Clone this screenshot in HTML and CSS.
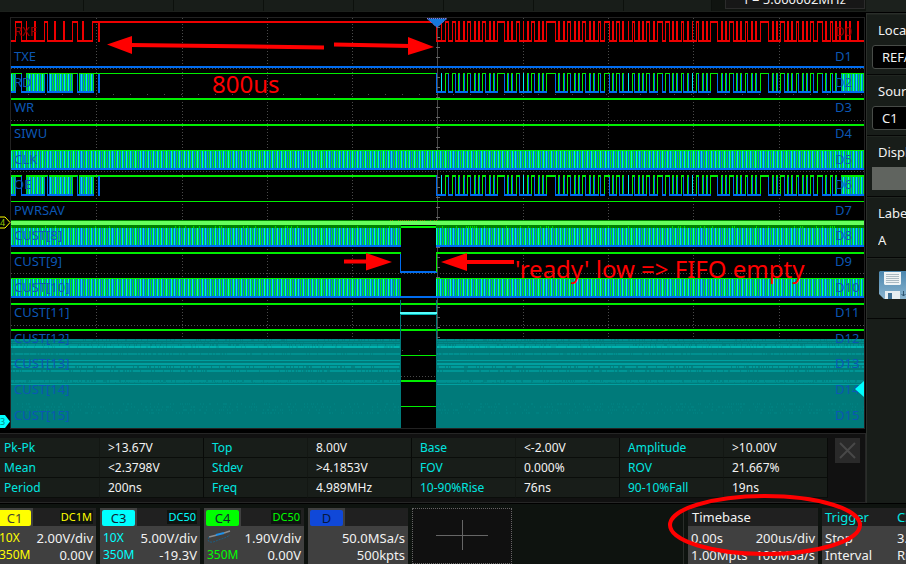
FILE: index.html
```html
<!DOCTYPE html>
<html lang="en">
<head>
    <meta charset="utf-8">
    <title>Oscilloscope</title>
    <link rel="stylesheet" href="styles.css">
</head>
<body>
    <div class="scope">
        <header class="menu">
            <div class="menu-items">
                <span></span><span></span><span></span><span></span>
                <span></span><span></span><span></span><span></span>
            </div>
            <div class="counter">f = 5.000002MHz</div>
            <div class="menu-end"></div>
        </header>

        <main class="main">
            <svg class="screen" id="screen" viewBox="0 12 866 421" role="img" aria-label="Waveforms">
                <defs>
                    <pattern id="dense" width="31" height="40" patternUnits="userSpaceOnUse"></pattern>
                </defs>
                <rect class="frame" x="10.5" y="17.5" width="854" height="411"/>
                <g id="grid"></g>
                <g id="traces"></g>
                <g id="analog"></g>
                <g id="labels"></g>

                <!-- trigger position and channel offset markers -->
                <path class="trigger-pos" d="M427 18.500H447L437 27.500Z"/>
                <path class="mark-c4" d="M-1 217H5L10 222.500L5 228H-1"/>
                <text class="mark-text mark-text-c4" x="0" y="226">4</text>
                <path class="mark-c3" d="M0 415H5L10 421.500L5 428H0Z"/>
                <text class="mark-text" x="0" y="425">3</text>
                <path class="mark-c3" d="M864 381L855 389L864 397Z"/>

                <g class="note">
                    <path class="note-line" d="M130 45L324 47.500M334 44.500L410 46M344 261.500H368M465 262H514"/>
                    <path d="M107 44.500L132 36V54ZM434 47L408 37V55ZM392 262L366 253V270.500ZM441 262L467 253V271Z"/>
                    <text x="212" y="93">800us</text>
                    <text x="515" y="278">'ready' low =&gt; FIFO empty</text>
                </g>
            </svg>

            <section class="measure">
                <div class="measure-list">
                    <table class="measure-table">
                        <tr>
                            <th>Pk-Pk</th><td>&gt;13.67V</td>
                            <th>Top</th><td>8.00V</td>
                            <th>Base</th><td>&lt;-2.00V</td>
                            <th>Amplitude</th><td>&gt;10.00V</td>
                        </tr>
                        <tr>
                            <th>Mean</th><td>&lt;2.3798V</td>
                            <th>Stdev</th><td>&gt;4.1853V</td>
                            <th>FOV</th><td>0.000%</td>
                            <th>ROV</th><td>21.667%</td>
                        </tr>
                        <tr>
                            <th>Period</th><td>200ns</td>
                            <th>Freq</th><td>4.989MHz</td>
                            <th>10-90%Rise</th><td>76ns</td>
                            <th>90-10%Fall</th><td>19ns</td>
                        </tr>
                    </table>
                </div>
                <button type="button" class="close" aria-label="Close">
                    <svg width="25" height="25" viewBox="0 0 25 25"><path d="M5 5L20 20M20 5L5 20"/></svg>
                </button>
            </section>
        </main>

        <aside class="side">
            <div class="side-group">
                <label for="location">Loca</label>
                <select id="location"><option>REFA</option></select>
            </div>
            <div class="side-group">
                <label for="source">Sour</label>
                <select id="source"><option>C1</option></select>
            </div>
            <div class="side-group">
                <label for="display">Displ</label>
                <button type="button" class="toggle" id="display"></button>
            </div>
            <div class="side-group">
                <label for="label">Labe</label>
                <input id="label" type="text" value="A">
            </div>
            <div class="side-group">
                <button type="button" class="save" aria-label="Save">
                    <svg width="32" height="28" viewBox="0 0 32 28">
                        <defs>
                            <linearGradient id="disk" x1="0" y1="0" x2="0" y2="1">
                                <stop offset="0" stop-color="#4a86ae"/>
                                <stop offset="1" stop-color="#8ab4cf"/>
                            </linearGradient>
                        </defs>
                        <path fill="url(#disk)" d="M1 0H32V28H5L0 23V1Z"/>
                        <path fill="#eef3f5" d="M5 1H22V13L21 14H6L5 13Z"/>
                        <path stroke="#a9b9c2" d="M7 3.500H20M7 5.500H20M7 7.500H20M7 9.500H20M7 11.500H20"/>
                        <path fill="#e6eef2" d="M6 20H21V28H6Z"/>
                        <path fill="#3f7195" d="M9 22H13V28H9Z"/>
                        <path fill="none" stroke="#2d536e" d="M24.500 20V25M22.500 23L24.500 25L26.500 23"/>
                    </svg>
                </button>
            </div>
        </aside>

        <footer class="bar">
            <div class="card c1">
                <div class="card-head"><span class="tab"><b>C1</b></span><i>DC1M</i></div>
                <div class="row"><em>10X</em><span>2.00V/div</span></div>
                <div class="row"><em>350M</em><span>0.00V</span></div>
            </div>
            <div class="card c3">
                <div class="card-head"><span class="tab"><b>C3</b></span><i>DC50</i></div>
                <div class="row"><em>10X</em><span>5.00V/div</span></div>
                <div class="row"><em>350M</em><span>-19.3V</span></div>
            </div>
            <div class="card c4">
                <div class="card-head"><span class="tab"><b>C4</b></span><i>DC50</i></div>
                <div class="row">
                    <svg width="25" height="14" viewBox="0 0 25 14" fill="none">
                        <path stroke="#8a8f92" stroke-width="1.500" d="M2 7L10 5M17 3L23 1"/>
                        <path stroke="#1e90e8" stroke-width="2" d="M9 5L17 3"/>
                        <path stroke="#1d5c80" stroke-dasharray="2 1" d="M2 7C-1 13 5 13 9 11S17 9 23 5"/>
                    </svg>
                    <span>1.90V/div</span>
                </div>
                <div class="row"><em>350M</em><span>0.00V</span></div>
            </div>
            <div class="card digital">
                <div class="card-head"><span class="tab"><b>D</b></span></div>
                <div class="row"><em></em><span>50.0MSa/s</span></div>
                <div class="row"><em></em><span>500kpts</span></div>
            </div>
            <button type="button" class="add" aria-label="Add channel">
                <svg width="52" height="30" viewBox="0 0 52 30"><path d="M0 15.500H52M26.500 0V30"/></svg>
            </button>
            <div class="acquire">
                <div class="card timebase">
                    <div class="card-head">Timebase</div>
                    <div class="row"><span>0.00s</span><span>200us/div</span></div>
                    <div class="row"><span>1.00Mpts</span><span>100MSa/s</span></div>
                    <svg class="circle" width="198" height="66" viewBox="0 0 198 66"><ellipse cx="99" cy="33" rx="95" ry="29"/></svg>
                </div>
                <div class="card trigger">
                    <div class="card-head"><span>Trigger</span><span>C3</span></div>
                    <div class="row"><span>Stop</span><span>3.</span></div>
                    <div class="row"><span>Interval</span><span>Ris</span></div>
                </div>
            </div>
        </footer>
    </div>
    <script src="scope.js"></script>
</body>
</html>
```
FILE: styles.css
```css
* {
    box-sizing: border-box;
}
body {
    margin: 0;
    background: #000;
    color: #f2f2f2;
    font: 13px/16px "Noto Sans", "Open Sans", sans-serif;
    overflow: hidden;
}
button, select, input {
    font: inherit;
    color: inherit;
    padding: 0;
    border: none;
}
.scope {
    display: grid;
    grid-template-columns: minmax(0, 1fr) 40px;
    min-height: 100vh;
    grid-template-rows: auto auto 1fr;
    overflow: hidden;
}

/* top menu */
.menu {
    grid-column: 1 / 3;
    display: flex;
    height: 12px;
    background: #101410;
    border-bottom: 1px solid #1c201c;
}
.menu-items {
    display: flex;
    width: 712px;
}
.menu-items span {
    flex: 0 0 90px;
    background: #181d19;
    border-right: 1px solid #0c100c;
}
.menu-items span:first-child {
    flex-basis: 84px;
}
.menu-items span:last-child {
    flex: 1;
}
.counter {
    display: flex;
    align-items: flex-end;
    justify-content: center;
    width: 140px;
    height: 9px;
    margin-left: auto;
    padding-bottom: 2px;
    line-height: 14px;
    background: #171717;
    border: 1px solid #2c2c2c;
    border-top: none;
    overflow: hidden;
}
.menu-end {
    width: 40px;
    margin-left: 1px;
    background: #1c211d;
}

/* screen */
.screen {
    display: block;
    width: 100%;
    height: auto;
}
.frame {
    fill: none;
    stroke: #222;
}
.dots {
    fill: none;
    stroke: #4a4a4a;
    stroke-dasharray: 1 2;
}
#traces, #grid, #analog {
    shape-rendering: crispEdges;
}
.label {
    font-size: 13px;
    fill: #0c57b4;
}
.label.red {
    fill: #940000;
}
.trigger-pos {
    fill: #1478dc;
    stroke: #8c78dc;
    stroke-dasharray: 1 1;
}
.mark-c4 {
    fill: #000;
    stroke: #ff0;
}
.mark-c3 {
    fill: #0ff;
}
.mark-text {
    font-size: 9px;
    fill: #008a8a;
}
.mark-text-c4 {
    fill: #9c0;
}
.note {
    fill: #f00;
    font-size: 24px;
}
.note-line {
    stroke: #f00;
    stroke-width: 4;
}

/* measurements */
.measure {
    display: flex;
    height: 70px;
    padding-top: 4px;
    background: #111;
    border: 1px solid #262626;
    border-left: none;
}
.measure-list {
    flex: 1;
    margin-left: -4px;
}
.measure-table {
    width: 100%;
    table-layout: fixed;
    border-spacing: 0;
    font-size: 12px;
    line-height: 19px;
    background: #181d19;
}
.measure-table th, .measure-table td {
    padding: 0 0 0 8px;
    border-bottom: 1px solid #0a0d0a;
    text-align: left;
    font-weight: normal;
}
.measure-table th {
    color: #00e6e0;
    border-right: 1px solid #131713;
}
.measure-table td {
    border-right: 1px solid #080a08;
}
.close {
    width: 25px;
    height: 25px;
    margin: 0 5px 0 7px;
    background: #2a2a2a;
}
.close svg {
    display: block;
    stroke: #484848;
    stroke-width: 2;
}

/* side panel */
.side {
    background: #181d19;
    border-left: 1px solid #2a2e2a;
    border-top: 1px solid #2a2e2a;
    margin-top: 1px;
    overflow: hidden;
}
.side-group {
    width: 100px;
    height: 61px;
    padding: 8px 5px 0;
    border-bottom: 1px solid #050605;
    box-shadow: inset 0 1px #202520;
}
.side-group label {
    display: block;
    padding-left: 6px;
    margin-bottom: 7px;
}
.side-group select, .side-group input {
    display: block;
    width: 90px;
    height: 24px;
    padding-left: 9px;
    border: 1px solid #484c48;
    border-radius: 3px;
    background: #000;
    appearance: none;
}
.side-group input {
    padding-left: 5px;
    border-color: transparent;
    background: none;
}
.toggle {
    display: block;
    width: 90px;
    height: 23px;
    background: #60645f;
}
.save {
    margin: 5px 0 0 7px;
    background: none;
}
.save svg {
    display: block;
}

/* channel bar */
.bar {
    grid-column: 1 / 3;
    display: flex;
    gap: 4px;
    height: 61px;
    padding-top: 4px;
    background: #0e130f;
    border-top: 1px solid #000;
}
.card {
    width: 100px;
    height: 57px;
    flex: none;
    background: #404040;
}
.c1 {
    margin-left: -4px;
    color: #ff0;
}
.c3 {
    color: #0ff;
}
.c4 {
    color: #0f0;
}
.card-head {
    display: flex;
    justify-content: space-between;
    align-items: center;
    height: 18px;
    padding-right: 3px;
    margin-bottom: 4px;
    background: #202020;
}
.tab {
    width: 37px;
    height: 18px;
    padding: 2px 2px 0;
    background: #404040;
}
.tab b {
    display: block;
    height: 16px;
    border-radius: 2px;
    color: #123;
    text-align: center;
    font-weight: normal;
}
.c1 b {
    background: #ff0;
    color: #443;
}
.c3 b {
    background: #0ff;
}
.c4 b {
    background: #0f0;
}
.digital b {
    background: #1048d8;
    color: #061840;
}
.card-head i {
    padding: 0 1px;
    font-size: 11px;
    line-height: 14px;
    font-style: normal;
    background: #0e130f;
}
.row {
    display: flex;
    justify-content: space-between;
    height: 17px;
    padding: 0 3px;
}
.row em {
    font-style: normal;
    font-size: 12px;
}
.row span {
    color: #f2f2f2;
}
.add {
    width: 100px;
    height: 56px;
    border: 1px dotted #666;
    background: #101010;
}
.add svg {
    stroke: #666;
}
.acquire {
    display: flex;
    gap: 4px;
    margin-left: auto;
    padding-left: 4px;
    border-left: 1px solid #2a2e2a;
}
.timebase {
    position: relative;
    width: 130px;
}
.timebase .card-head {
    padding-left: 4px;
}
.circle {
    position: absolute;
    left: -22px;
    top: -16px;
    z-index: 1;
    fill: none;
    stroke: #f00;
    stroke-width: 4;
}
.trigger {
    width: 84px;
    overflow: hidden;
}
.trigger .card-head, .trigger .row {
    width: 100px;
    padding: 0 3px;
    justify-content: flex-start;
}
.trigger span:first-child {
    flex: 0 0 72px;
}
.trigger .card-head {
    color: #00e6e0;
}
```
FILE: scope.js
```javascript
const NS = "http://www.w3.org/2000/svg";
const GREEN = "#00ee00", BLUE = "#006cf0", CYAN = "#00f0f0", RED = "#ee0000";
const grid = document.getElementById("grid");
const traces = document.getElementById("traces");
const analog = document.getElementById("analog");
const labels = document.getElementById("labels");

function add(parent, tag, attrs) {
    const el = document.createElementNS(NS, tag);
    for (let key in attrs)
        el.setAttribute(key, attrs[key]);
    parent.appendChild(el);
    return el;
}
function box(parent, x, y, x2, y2, fill) {
    return add(parent, "rect", {x: x, y: y, width: x2 - x, height: y2 - y, fill: fill});
}

let seed = 7;
function random() {
    seed = (seed * 16807) % 2147483647;
    return seed / 2147483647;
}

// bars used where the signal is too fast to resolve
const columns = "gbcgbgcbgbgcgbgbcgbcbgbgcbgbgcb";
const colors = {g: "#00e020", b: "#0078d8", c: "#00f0e0"};
const dense = document.getElementById("dense");
[...columns].forEach((c, i) => box(dense, i, 0, i + 1, 40, colors[c]));

// graticule
for (let x of [96, 182, 267, 352, 523, 608, 693, 779])
    add(grid, "path", {class: "dots", d: `M${x}.5 18V428`});
for (let y of [68, 120, 171, 273, 325, 376])
    add(grid, "path", {class: "dots", d: `M11 ${y}.5H864`});
box(grid, 437, 18, 438, 428, "#4a4a4a");
for (let y = 27; y < 345; y += 10)
    box(grid, 436, y, 440, y + 1, "#666");
for (let x = 28; x < 864; x += 17) {
    box(grid, x, 94, x + 1, 95, "#4a4a4a");
    box(grid, x, 350, x + 1, 351, "#4a4a4a");
}

// high periods of the bus signals
const before = [[15, 22], [26, 27], [34, 36], [44, 48], [54, 56], [63, 65], [72, 78], [82, 84], [92, 437]];
const after = [
    [441, 442], [445, 449], [452, 456], [458, 460], [463, 465], [467, 471], [474, 476], [478, 480],
    [482, 486], [489, 491], [493, 495], [497, 505], [507, 509], [511, 513], [516, 520], [523, 524],
    [527, 529], [531, 535], [538, 540], [542, 544], [546, 556], [558, 560], [563, 565], [567, 571],
    [574, 576], [578, 580], [582, 586], [589, 591], [593, 595], [598, 601], [604, 610], [612, 614],
    [616, 620], [622, 624], [628, 629], [632, 635], [638, 640], [642, 644], [646, 650], [653, 655],
    [657, 663], [665, 670], [672, 674], [676, 678], [681, 684], [687, 689], [692, 693], [696, 699],
    [702, 704], [706, 708], [710, 718], [721, 723], [725, 727], [729, 734], [736, 738], [740, 742],
    [745, 748], [751, 753], [755, 757], [760, 769], [772, 774], [776, 778], [780, 785], [787, 789],
    [791, 793], [796, 799], [802, 804], [806, 808], [810, 814], [817, 823], [825, 827], [830, 833],
    [835, 837], [839, 841], [845, 847], [849, 851], [857, 859]
];

function drawRed() {
    box(traces, 11, 40, 98, 42, RED);
    box(traces, 437, 40, 864, 42, RED);
    for (let [a, b] of before.concat(after)) {
        if (b - a > 2)
            box(traces, a + 1, 40, b - 1, 42, "#000");
        box(traces, a, 21, b, 23, RED);
        box(traces, a, 21, a + 1, 42, RED);
        box(traces, b - 1, 21, b, 42, RED);
    }
    box(traces, 98, 21, 100, 42, RED);
}

function drawBus(top, thick) {
    const bottom = top + 20 + thick - 1;
    for (let [a, b] of [[11, 16], [26, 45], [49, 73], [79, 94], [841, 864]])
        box(traces, a, top, b, bottom, "url(#dense)");
    for (let [a, b] of [[11, 16], [21, 45], [47, 73], [77, 94], [98, 100], [436, 864]])
        box(traces, a, bottom - 2, b, bottom, BLUE);
    for (let [a, b] of [[11, 22], [26, 48], [49, 78], [79, 437], [841, 864]])
        box(traces, a, top, b, top + thick, GREEN);
    for (let x of [21, 47, 77])
        box(traces, x, top + 1, x + 1, bottom, BLUE);
    box(traces, 98, top + 1, 100, bottom, BLUE);
    box(traces, 436, top, 437, bottom, BLUE);
    for (let [a, b] of after) {
        if (a > 838)
            break;
        if (b - a > 2)
            box(traces, a + 1, bottom - 2, b - 1, bottom, "#000");
        box(traces, a, top, b, top + thick, GREEN);
        box(traces, a, top, a + 1, bottom - 2, b - a == 1 ? CYAN : GREEN);
        if (b - a > 1)
            box(traces, b - 1, top + thick, b, bottom, BLUE);
    }
}

function drawClock(a, b, top, bottom, thick) {
    box(traces, a, top, b, bottom, "url(#dense)");
    box(traces, a, top, b, top + thick, GREEN);
    box(traces, a, bottom - 2, b, bottom, BLUE);
}

drawRed();
box(traces, 11, 66, 864, 68, BLUE);
drawBus(73, 1);
box(traces, 11, 98, 864, 100, GREEN);
box(traces, 11, 124, 864, 126, GREEN);
drawClock(11, 864, 150, 170, 1);
drawBus(175, 2);
box(traces, 11, 201, 864, 202, GREEN);
for (let [a, b] of [[11, 401], [436, 864]]) {
    drawClock(a, b, 226, 247, 1);
    drawClock(a, b, 278, 298, 1);
    box(traces, a, 252, b, 254, GREEN);
}
box(traces, 401, 226, 437, 228, GREEN);
box(traces, 401, 296, 436, 298, BLUE);
box(traces, 400, 254, 401, 273, BLUE);
box(traces, 400, 271, 437, 273, BLUE);
box(traces, 436, 252, 437, 272, GREEN);
box(traces, 11, 303, 864, 305, GREEN);
box(traces, 11, 329, 864, 331, GREEN);
box(traces, 400, 355, 436, 356, GREEN);
box(traces, 400, 380, 436, 382, GREEN);
box(traces, 400, 406, 436, 407, GREEN);

// C4
for (let [a, b] of [[11, 401], [436, 864]]) {
    box(analog, a, 225, b, 228, "#008200");
    for (let x = a; x < b; x += 2)
        if (random() < 0.15)
            box(analog, x, 226, x + 1, 228, "#00d800");
}
box(analog, 11, 220, 864, 221, "#008200");
box(analog, 11, 221, 864, 225, "#66ff5c");
for (let x = 390; x < 437; x += 2)
    if (random() < 0.6)
        box(analog, x, 220, x + 1, 221, "#8c6400");

// C3
const bands = [
    [339, 341, "#009090", 1], [342, 343, "#008c8c", 1], [344, 346, "#009292", 1], [346, 348, "#00b4b0", 1],
    [353, 355, "#009090", 1], [360, 361, "#00a0a0", 0], [363, 365, "#00a0a0", 0], [366, 368, "#009c9c", 1],
    [370, 372, "#009696", 1], [380, 382, "#009292", 1], [382, 383, "#008c8c", 1], [384, 385, "#00a0a0", 0]
];
for (let [a, b] of [[11, 401], [436, 864]]) {
    box(analog, a, 339, b, 428, "#007a7a");
    for (let [y, y2, color, noisy] of bands) {
        box(analog, a, y, b, y2, color);
        if (noisy) {
            let d = "";
            for (let x = a; x < b; x++)
                if (random() < 0.2)
                    d += `M${x} ${y}h1v${y2 - y}h-1z`;
            add(analog, "path", {d: d, fill: y == 346 ? "#00a4a0" : "#008484"});
        }
    }
    let d = "";
    for (let x = a; x < b; x++)
        for (let y of [403, 406, 409, 412])
            if (random() < 0.2)
                d += `M${x} ${y}h1v2h-1z`;
    add(analog, "path", {d: d, fill: "#008080"});
}
box(analog, 400, 300, 401, 428, "#007a7a");
box(analog, 436, 300, 437, 428, "#007a7a");
box(analog, 400, 312, 437, 314, "#55ffff");
box(analog, 401, 314, 436, 315, "#00b4b4");

// channel names
const names = ["RXF", "TXE", "RD", "WR", "SIWU", "CLK", "OE", "PWRSAV"];
for (let i = 0; i < 16; i++) {
    const y = Math.round(35.5 + 25.6 * i);
    const cls = i ? "label" : "label red";
    add(labels, "text", {class: cls, x: 14, y: y}).textContent = names[i] || `CUST[${i}]`;
    add(labels, "text", {class: cls, x: 835, y: y}).textContent = "D" + i;
}
```
